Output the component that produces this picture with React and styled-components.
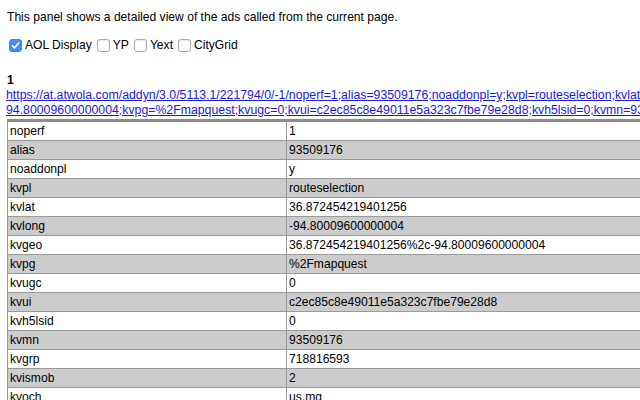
import { createGlobalStyle, styled } from "styled-components";

const GlobalStyle = createGlobalStyle`
  body {
    margin: 0;
    overflow: hidden;
    background: #fff;
    color: #000;
    font-family: "Liberation Sans", Arial, sans-serif;
    font-size: 12.1px;
  }
`;

const Page = styled.div`
  width: 1080px;
  padding: 9px 7px 0 7px;
`;

const Intro = styled.p`
  margin: 0;
  line-height: 16px;
`;

const Filters = styled.div`
  display: flex;
  align-items: center;
  height: 16px;
  margin-top: 12px;
  padding-left: 2px;
`;

const Filter = styled.label`
  display: flex;
  align-items: center;
  gap: 3px;
  margin-right: 5px;
  line-height: 16px;
`;

const Box = styled.span`
  display: inline-flex;
  align-items: center;
  justify-content: center;
  width: 13px;
  height: 13px;
  box-sizing: border-box;
  border-radius: 3px;
  border: 1px solid ${(p) => (p.$checked ? "#3d86ee" : "#a9a9a9")};
  background: ${(p) => (p.$checked ? "#3d8ef3" : "#fff")};
  box-shadow: ${(p) => (p.$checked ? "none" : "inset 0 1px 1px rgba(0,0,0,0.08)")};
`;

const AdTitle = styled.h4`
  margin: 19px 0 0;
  font-size: 12px;
  font-weight: bold;
  line-height: 16px;
`;

const AdLink = styled.a`
  display: block;
  margin-left: -1px;
  font-size: 12.3px;
  line-height: 15px;
  color: #1a1ad8;
  white-space: nowrap;
`;

const ParamTable = styled.table`
  width: 1070px;
  margin-top: 1px;
  table-layout: fixed;
  border-collapse: collapse;
  border-top: 3px solid #8c8c8c;
`;

const Row = styled.tr`
  &:nth-child(even) td {
    background: #cccccc;
  }
`;

const Cell = styled.td`
  padding: 1px 3px 1px 2px;
  line-height: 16px;
  border: 1px solid #9a9a9a;
  white-space: nowrap;
  overflow: hidden;
`;

const providers = [
  { name: "AOL Display", checked: true },
  { name: "YP", checked: false },
  { name: "Yext", checked: false },
  { name: "CityGrid", checked: false },
];

const params = [
  ["noperf", "1"],
  ["alias", "93509176"],
  ["noaddonpl", "y"],
  ["kvpl", "routeselection"],
  ["kvlat", "36.872454219401256"],
  ["kvlong", "-94.80009600000004"],
  ["kvgeo", "36.872454219401256%2c-94.80009600000004"],
  ["kvpg", "%2Fmapquest"],
  ["kvugc", "0"],
  ["kvui", "c2ec85c8e49011e5a323c7fbe79e28d8"],
  ["kvh5lsid", "0"],
  ["kvmn", "93509176"],
  ["kvgrp", "718816593"],
  ["kvismob", "2"],
  ["kvoch", "us.mg"],
  ["kvmbl", "0"],
];

const lineOne =
  "https://at.atwola.com/addyn/3.0/5113.1/221794/0/-1/noperf=1;alias=93509176;noaddonpl=y;kvpl=routeselection;kvlat=36.872454219401256;kvlong=-94.80009600000004;kvgeo=36.872454219401256%2c-";
const lineTwo =
  "94.80009600000004;kvpg=%2Fmapquest;kvugc=0;kvui=c2ec85c8e49011e5a323c7fbe79e28d8;kvh5lsid=0;kvmn=93509176;kvgrp=718816593;kvismob=2;kvoch=us.mg;kvmbl=0";

function Check() {
  return (
    <svg width="9" height="9" viewBox="0 0 9 9">
      <polyline
        points="1.5,4.8 3.6,6.9 7.6,2"
        fill="none"
        stroke="#fff"
        strokeWidth="1.7"
        strokeLinecap="round"
        strokeLinejoin="round"
      />
    </svg>
  );
}

export default function App() {
  return (
    <>
      <GlobalStyle />
      <Page>
        <Intro>This panel shows a detailed view of the ads called from the current page.</Intro>
        <Filters>
          {providers.map((p) => (
            <Filter key={p.name}>
              <Box $checked={p.checked}>{p.checked && <Check />}</Box>
              {p.name}
            </Filter>
          ))}
        </Filters>
        <AdTitle>1</AdTitle>
        <AdLink href="#">
          {lineOne}
          <br />
          {lineTwo}
        </AdLink>
        <ParamTable>
          <colgroup>
            <col style={{ width: 279 }} />
            <col />
          </colgroup>
          <tbody>
            {params.map(([k, v]) => (
              <Row key={k}>
                <Cell>{k}</Cell>
                <Cell>{v}</Cell>
              </Row>
            ))}
          </tbody>
        </ParamTable>
      </Page>
    </>
  );
}
